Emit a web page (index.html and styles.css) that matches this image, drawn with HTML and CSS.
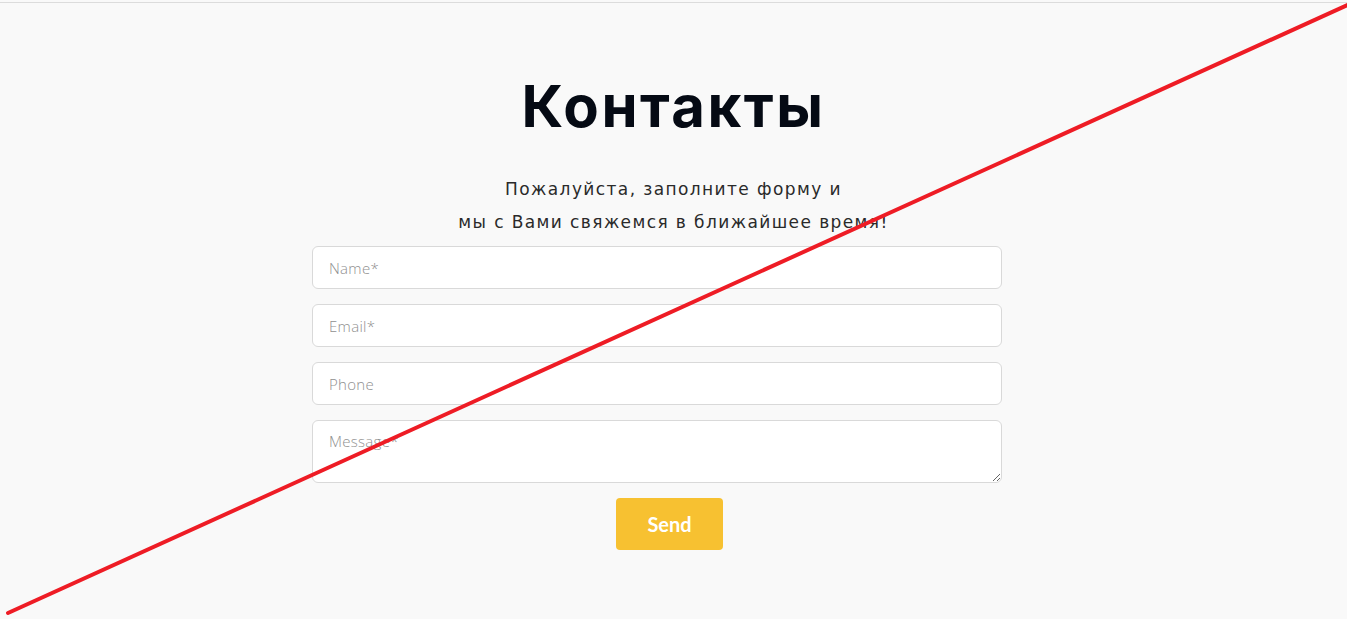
FILE: index.html
```html
<!DOCTYPE html>
<html lang="ru">

<head>
    <meta charset="UTF-8">
    <meta name="viewport" content="width=device-width, initial-scale=1.0">
    <title>Контакты</title>
    <link rel="stylesheet" href="styles.css">
</head>

<body>

    <section class="contacts">
        <h1 class="contacts-title">Контакты</h1>
        <p class="contacts-text">Пожалуйста, заполните форму и<br>мы с Вами свяжемся в ближайшее время!</p>

        <form class="contact-form" onsubmit="return false;">
            <input type="text" class="field" placeholder="Name*">
            <input type="email" class="field" placeholder="Email*">
            <input type="tel" class="field" placeholder="Phone">
            <textarea class="field field-message" placeholder="Message*"></textarea>
            <button type="submit" class="send-btn">Send</button>
        </form>
    </section>

    <!-- перечеркнуто -->
    <svg class="strike" width="1347" height="619" viewBox="0 0 1347 619">
        <line x1="8" y1="613" x2="1352" y2="3" stroke="#ee1c25" stroke-width="4" stroke-linecap="round" />
    </svg>

</body>

</html>
```

FILE: styles.css
```css
html,
body {
    margin: 0;
    padding: 0;
}

body {
    background: #f9f9f9;
    font-family: 'Open Sans', sans-serif;
    min-height: 100vh;
    overflow: hidden;
}

.contacts {
    margin-top: 2px;
    border-top: 1px solid #dcdcdc;
    display: flex;
    flex-direction: column;
    align-items: center;
    padding-top: 63px;
}

.contacts-title {
    font-family: 'Inter', sans-serif;
    font-weight: 700;
    font-size: 58px;
    line-height: 80px;
    letter-spacing: 2.5px;
    color: #050a14;
    margin: 0 0 27px;
}

.contacts-text {
    font-family: 'DejaVu Sans', sans-serif;
    font-weight: 400;
    font-size: 17px;
    line-height: 33px;
    letter-spacing: 1.4px;
    color: #2a2a2a;
    text-align: center;
    margin: 0 0 7px;
}

.contact-form {
    width: 723px;
    display: flex;
    flex-direction: column;
    align-items: center;
    gap: 15px;
}

.field {
    align-self: flex-start;
    width: 690px;
    box-sizing: border-box;
    height: 43px;
    padding: 0 16px;
    border: 1px solid #d9d9d9;
    border-radius: 6px;
    background: #fff;
    font-family: 'Open Sans', sans-serif;
    font-weight: 300;
    font-size: 15px;
    letter-spacing: 0.3px;
    color: #333;
    outline: none;
}

.field::placeholder {
    color: #8f8f8f;
}

.field-message {
    height: 63px;
    padding: 10px 16px;
    resize: vertical;
}

.send-btn {
    width: 107px;
    height: 52px;
    margin-right: 8px;
    border: none;
    border-radius: 4px;
    background-color: #f7c131;
    color: #fff;
    font-family: 'Lato', sans-serif;
    font-weight: 700;
    font-size: 20px;
    cursor: pointer;
}

.strike {
    position: absolute;
    top: 0;
    left: 0;
    pointer-events: none;
}
```
